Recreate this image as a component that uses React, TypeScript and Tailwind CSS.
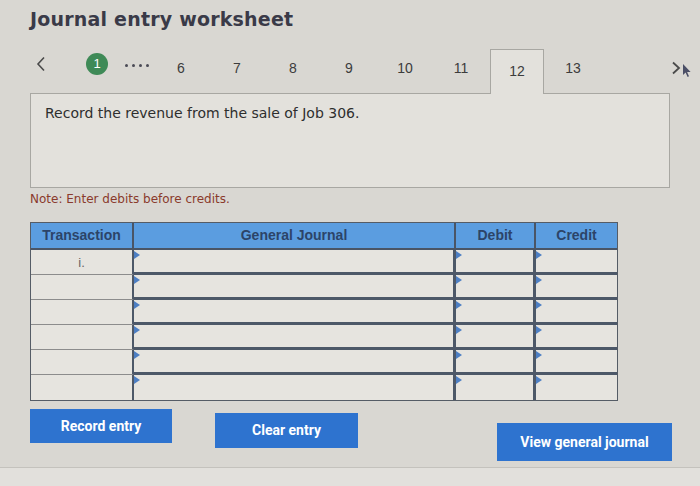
import React from "react";

const rows = [0, 1, 2, 3, 4, 5];

function Tri() {
  return (
    <svg className="absolute left-0 top-[1px]" width="6" height="8" viewBox="0 0 6 8">
      <path d="M0 0 L6 4 L0 8 Z" fill="#4d7fc4" />
    </svg>
  );
}

export default function App() {
  const nums = ["6", "7", "8", "9", "10", "11", "12", "13"];
  return (
    <div className="relative w-[700px] h-[486px] overflow-hidden bg-[#d9d7d2] text-[#333]" style={{ fontFamily: '"DejaVu Sans", Verdana, sans-serif' }}>
      <div className="pl-[30px] pt-[5px] h-[49px] text-[19px] font-bold text-[#3a3a48] tracking-[0.2px]">
        Journal entry worksheet
      </div>

      {/* nav */}
      <div className="flex items-stretch h-[44px] pl-[30px] text-[14px] text-[#3c3c3c]" style={{ fontFamily: '"Liberation Sans", Arial, sans-serif' }}>
        <div className="w-[22px] flex items-start pt-[7px] justify-center">
          <svg width="10" height="16" viewBox="0 0 10 16">
            <path d="M8 1.5 L2 8 L8 14.5" fill="none" stroke="#4a4a4a" strokeWidth="1.6" />
          </svg>
        </div>
        <div className="w-[56px] ml-[17px] flex items-start pt-[4px] justify-center">
          <div className="w-[22px] h-[22px] rounded-full bg-[#3f8a57] text-white text-[13px] flex items-center justify-center">1</div>
        </div>
        <div className="w-[28px] flex items-start pt-[15px] gap-[4px]">
          <span className="w-[3px] h-[3px] rounded-full bg-[#4a4a55]" />
          <span className="w-[3px] h-[3px] rounded-full bg-[#4a4a55]" />
          <span className="w-[3px] h-[3px] rounded-full bg-[#4a4a55]" />
          <span className="w-[3px] h-[3px] rounded-full bg-[#4a4a55]" />
        </div>
        {nums.map((n) =>
          n === "12" ? (
            <div key={n} className="w-[54px] mx-[1px] border border-b-0 border-[#a8a7a2] bg-[#e3e1dc] flex items-start justify-center pt-[11px] relative z-10 h-[45px]">
              {n}
            </div>
          ) : (
            <div key={n} className="w-[56px] flex items-start justify-center pt-[9px]">{n}</div>
          )
        )}
        <div className="flex-1 flex items-start justify-end pr-[8px] pt-[12px] gap-[1px]">
          <svg width="10" height="14" viewBox="0 0 10 14">
            <path d="M2 1.5 L8 7 L2 12.5" fill="none" stroke="#4a4a4a" strokeWidth="1.8" />
          </svg>
          <svg width="10" height="16" viewBox="0 0 10 16" className="mt-[2px]">
            <path d="M1 1 L1 12 L3.6 9.6 L5.6 14 L7 13.3 L5.1 9 L8.6 9 Z" fill="#4b4f66" />
          </svg>
        </div>
      </div>

      {/* question box */}
      <div className="ml-[30px] w-[640px] h-[95px] border border-[#a8a7a2] bg-[#e3e1dc] pl-[14px] pt-[9px] text-[14px] text-[#2e2e2e]">
        Record the revenue from the sale of Job 306.
      </div>

      <div className="pl-[30px] pt-[2px] text-[12px] text-[#8a3a2c]">Note: Enter debits before credits.</div>

      {/* table */}
      <div className="ml-[30px] mt-[14px] w-[588px] border border-[#555c66]" style={{ fontFamily: '"Liberation Sans", Arial, sans-serif' }}>
        <div className="flex h-[27px] bg-[#5b9de0] text-[14px] font-bold text-[#2c4468] border-b-2 border-[#4a5566]">
          <div className="w-[103px] flex items-center justify-center border-r-2 border-[#4a5566]">Transaction</div>
          <div className="w-[322px] flex items-center justify-center border-r-2 border-[#4a5566]">General Journal</div>
          <div className="w-[80px] flex items-center justify-center border-r-2 border-[#4a5566]">Debit</div>
          <div className="flex-1 flex items-center justify-center">Credit</div>
        </div>
        {rows.map((r) => {
          const last = r === 5;
          return (
            <div key={r} className="flex h-[25px] bg-[#e6e4df]">
              <div className={`w-[103px] border-r-2 border-[#4d5868] flex justify-center pt-[3px] text-[13px] text-[#666] ${last ? "" : "border-b border-b-[#8c8c8c]"}`}>
                {r === 0 ? "i." : ""}
              </div>
              <div className={`w-[322px] border-r-[3px] border-[#4d5868] relative ${last ? "" : "border-b-[3px]"}`}><Tri /></div>
              <div className={`w-[80px] border-r-[3px] border-[#4d5868] relative ${last ? "" : "border-b-[3px]"}`}><Tri /></div>
              <div className={`flex-1 border-[#4d5868] relative ${last ? "" : "border-b-[3px]"}`}><Tri /></div>
            </div>
          );
        })}
      </div>

      {/* buttons */}
      <div className="flex items-start pl-[30px] mt-[8px] text-[14px] font-bold text-white" style={{ fontFamily: 'Roboto, "Liberation Sans", Arial, sans-serif' }}>
        <div className="w-[142px] h-[34px] bg-[#2e73cf] flex items-center justify-center">Record entry</div>
        <div className="w-[143px] h-[35px] ml-[43px] mt-[4px] bg-[#2e73cf] flex items-center justify-center">Clear entry</div>
        <div className="w-[175px] h-[38px] ml-[139px] mt-[14px] bg-[#2e73cf] flex items-center justify-center">View general journal</div>
      </div>

      <div className="absolute left-0 right-0 bottom-0 h-[19px] bg-[#e2e0dc] border-t border-[#c4c2bd]" />
    </div>
  );
}
